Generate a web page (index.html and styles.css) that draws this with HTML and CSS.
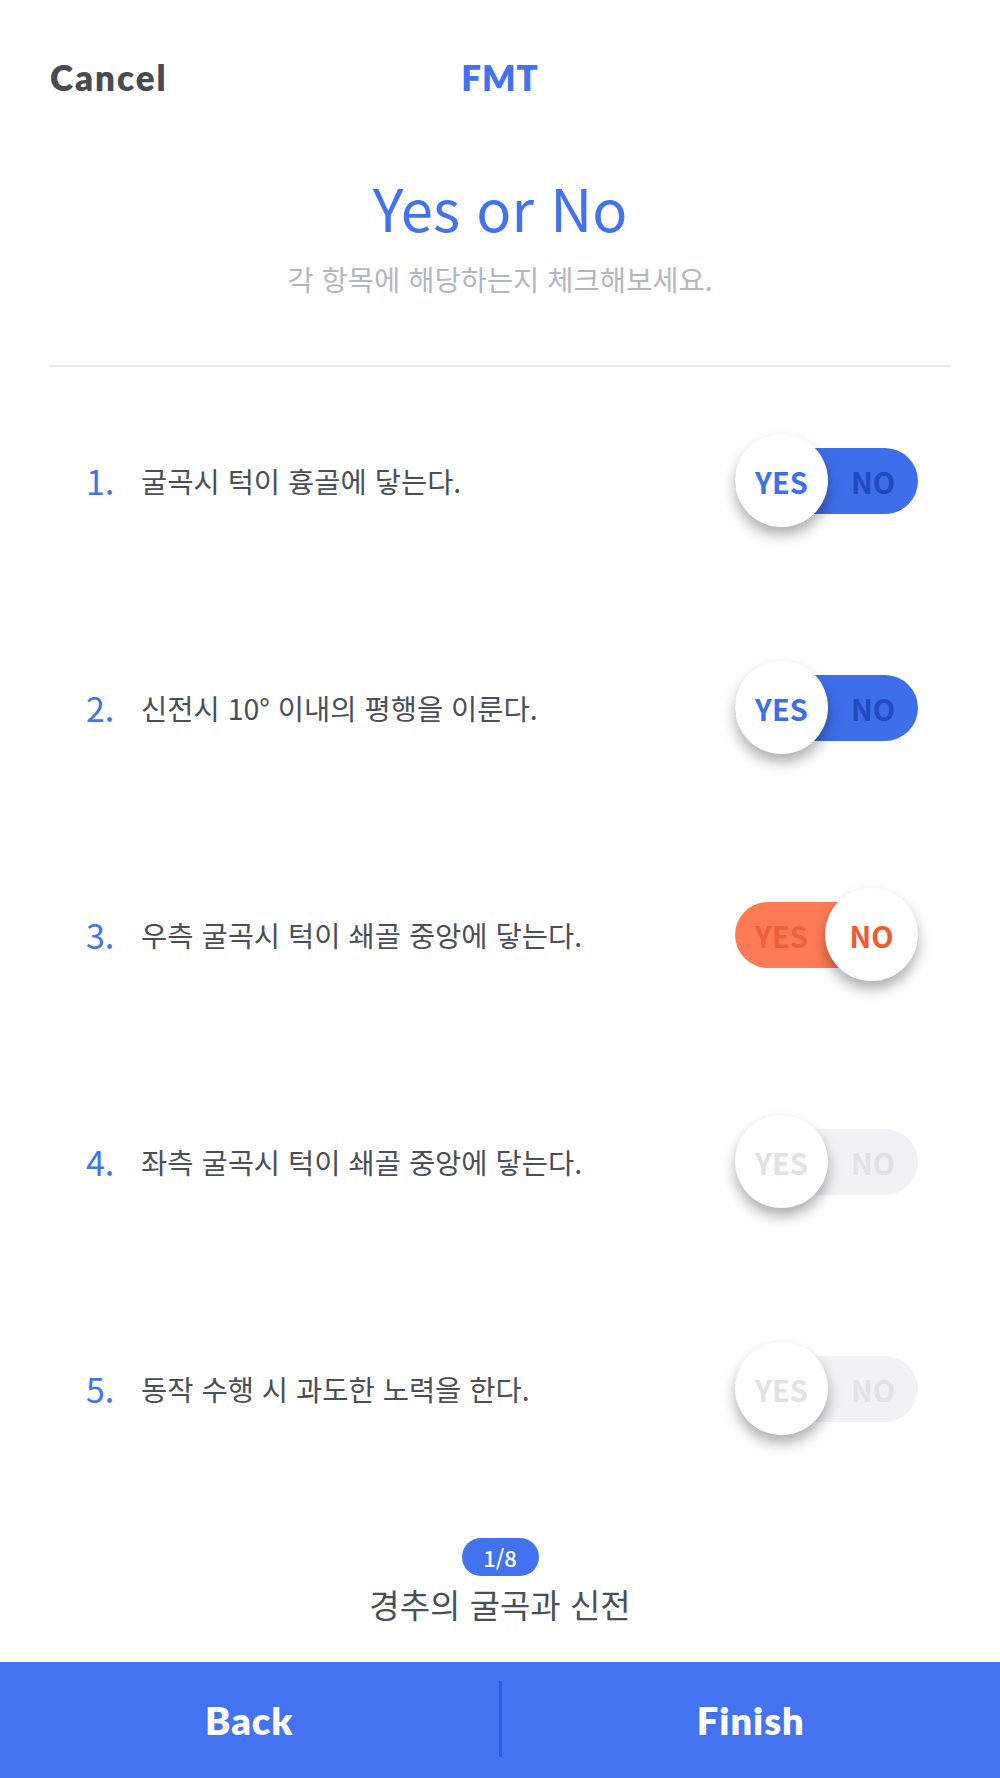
FILE: index.html
```html
<!DOCTYPE html>
<html lang="ko">
<head>
<meta charset="utf-8">
<title>FMT</title>
<link rel="stylesheet" href="styles.css">
</head>
<body>
<div class="screen">
  <header class="topbar">
    <span class="cancel">Cancel</span>
    <span class="brand">FMT</span>
    <span></span>
  </header>
  <section class="intro">
    <h1 class="title">Yes or No</h1>
    <p class="subtitle">각 항목에 해당하는지 체크해보세요.</p>
  </section>
  <hr class="divider">
  <ol class="items">
    <li class="item">
      <span class="num">1.</span>
      <span class="text">굴곡시 턱이 흉골에 닿는다.</span>
      <div class="toggle yes"><span class="lbl">YES</span><span class="lbl">NO</span><span class="knob">YES</span></div>
    </li>
    <li class="item">
      <span class="num">2.</span>
      <span class="text">신전시 10° 이내의 평행을 이룬다.</span>
      <div class="toggle yes"><span class="lbl">YES</span><span class="lbl">NO</span><span class="knob">YES</span></div>
    </li>
    <li class="item">
      <span class="num">3.</span>
      <span class="text">우측 굴곡시 턱이 쇄골 중앙에 닿는다.</span>
      <div class="toggle no"><span class="lbl">YES</span><span class="lbl">NO</span><span class="knob">NO</span></div>
    </li>
    <li class="item">
      <span class="num">4.</span>
      <span class="text">좌측 굴곡시 턱이 쇄골 중앙에 닿는다.</span>
      <div class="toggle off"><span class="lbl">YES</span><span class="lbl">NO</span><span class="knob">YES</span></div>
    </li>
    <li class="item">
      <span class="num">5.</span>
      <span class="text">동작 수행 시 과도한 노력을 한다.</span>
      <div class="toggle off"><span class="lbl">YES</span><span class="lbl">NO</span><span class="knob">YES</span></div>
    </li>
  </ol>
  <div class="progress">
    <span class="badge">1/8</span>
    <span class="section-name">경추의 굴곡과 신전</span>
  </div>
  <footer class="footer">
    <span class="fbtn">Back</span>
    <span class="fsep"></span>
    <span class="fbtn">Finish</span>
  </footer>
</div>
</body>
</html>
```

FILE: styles.css
```css
* { box-sizing: border-box; }
html, body { margin: 0; padding: 0; background: #fff; }
body { font-family: "Noto Sans CJK KR", "Noto Sans", sans-serif; }

.screen {
  width: 1000px;
  height: 1778px;
  display: flex;
  flex-direction: column;
  overflow: hidden;
}

.topbar {
  height: 154px;
  display: grid;
  grid-template-columns: 1fr auto 1fr;
  align-items: center;
  padding: 0 50px;
  font-family: "Lato", "Noto Sans", sans-serif;
  font-weight: 800;
  font-size: 35px;
  letter-spacing: 1px;
}
.cancel { color: #474c54; letter-spacing: 2px; }
.brand { color: #4272ef; }

.intro {
  display: flex;
  flex-direction: column;
  align-items: center;
  padding: 17px 0 68px;
}
.title {
  margin: 0;
  font-weight: 400;
  font-size: 58px;
  line-height: 72px;
  color: #4272ef;
}
.subtitle {
  margin: 18px 0 0;
  font-size: 28.5px;
  line-height: 36px;
  color: #b3b7be;
}

.divider {
  margin: 0 49px;
  border: 0;
  height: 2px;
  background: #e7e9ec;
}

.items {
  list-style: none;
  margin: 0;
  padding: 0;
}
.item {
  height: 227px;
  display: flex;
  align-items: center;
  padding: 0 82px 0 86px;
}
.num {
  width: 55px;
  font-size: 34px;
  color: #4272ef;
  line-height: 1;
}
.text {
  flex: 1;
  font-size: 28.5px;
  color: #4a4f57;
}

.toggle {
  position: relative;
  width: 183px;
  height: 66px;
  border-radius: 33px;
  display: grid;
  grid-template-columns: 93px 1fr;
  align-items: center;
  font-weight: 700;
  font-size: 29px;
}
.lbl { text-align: center; line-height: 66px; }
.knob {
  position: absolute;
  top: -13.5px;
  width: 93px;
  height: 93px;
  border-radius: 50%;
  background: #fff;
  display: flex;
  align-items: center;
  justify-content: center;
  box-shadow: 0 8px 14px rgba(0, 0, 0, 0.32);
}
.toggle.yes .knob, .toggle.off .knob { left: 0; }
.toggle.no .knob { right: 0; }

.toggle.yes { background: #3e6eea; color: #2149c2; }
.toggle.yes .knob { color: #3e6eea; }

.toggle.no { background: #ff7b55; color: #ee6038; }
.toggle.no .knob { color: #f05a2f; }

.toggle.off { background: #f1f2f4; color: #dfe2e6; }
.toggle.off .knob { color: #dfe2e6; }

.progress {
  display: flex;
  flex-direction: column;
  align-items: center;
  padding-top: 36px;
}
.badge {
  width: 77px;
  height: 38px;
  border-radius: 19px;
  background: #4272ef;
  color: #fff;
  font-size: 22px;
  font-weight: 500;
  display: flex;
  align-items: center;
  justify-content: center;
}
.section-name {
  margin-top: 5px;
  font-size: 33px;
  line-height: 46px;
  color: #4a4f57;
}

.footer {
  margin-top: auto;
  height: 116px;
  background: #4373f0;
  display: grid;
  grid-template-columns: 1fr 3px 1fr;
  align-items: center;
  font-family: "Lato", "Noto Sans", sans-serif;
  font-weight: 800;
  font-size: 38px;
  letter-spacing: 1px;
  color: #fff;
}
.fbtn { text-align: center; }
.fsep {
  align-self: stretch;
  margin: 19px 0 21px;
  background: #2d5de6;
}
```
